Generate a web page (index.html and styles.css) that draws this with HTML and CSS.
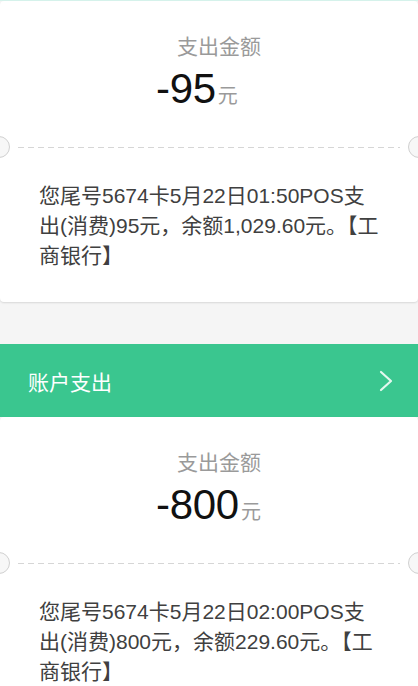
FILE: index.html
```html
<!DOCTYPE html>
<html lang="zh">
<head>
<meta charset="utf-8">
<link rel="stylesheet" href="styles.css">
</head>
<body>
<div class="topline"></div>
<div class="card">
  <div class="label">支出金额</div>
  <div class="amount"><span class="num">-95</span><span class="unit">元</span></div>
  <div class="divider"><span class="notch notch-l"></span><span class="dash"></span><span class="notch notch-r"></span></div>
  <div class="msg">您尾号5674卡5月22日01:50POS支出(消费)95元，余额1,029.60元。【工商银行】</div>
</div>
<div class="gap"></div>
<div class="bar">
  <span class="bar-title">账户支出</span>
  <svg class="chev" width="16" height="24" viewBox="0 0 16 24"><polyline points="3,3 13,12 3,21" fill="none" stroke="#e3f8ef" stroke-width="2.2" stroke-linecap="round" stroke-linejoin="round"/></svg>
</div>
<div class="card">
  <div class="label">支出金额</div>
  <div class="amount"><span class="num">-800</span><span class="unit">元</span></div>
  <div class="divider"><span class="notch notch-l"></span><span class="dash"></span><span class="notch notch-r"></span></div>
  <div class="msg">您尾号5674卡5月22日02:00POS支出(消费)800元，余额229.60元。【工商银行】</div>
</div>
</body>
</html>
```
FILE: styles.css
```css
html, body {
  margin: 0;
  padding: 0;
}
body {
  width: 418px;
  height: 686px;
  overflow: hidden;
  background: #f5f5f5;
  font-family: "Liberation Sans", "Noto Sans CJK SC", sans-serif;
}
.topline {
  height: 1px;
  background: #d6f3ec;
}
.card {
  background: #fff;
  border-radius: 4px;
  box-shadow: 0 1px 2px rgba(0,0,0,0.12);
  padding: 32px 0 31px;
  display: flex;
  flex-direction: column;
}
.label {
  text-align: center;
  font-size: 21px;
  line-height: 28px;
  color: #9a9a9a;
  padding-left: 20px;
}
.amount {
  margin-top: 6px;
  height: 44px;
  display: flex;
  justify-content: flex-start;
  align-items: baseline;
  line-height: 44px;
  padding-left: 156px;
}
.num {
  font-size: 42px;
  color: #111;
  letter-spacing: -0.3px;
}
.unit {
  font-size: 20px;
  color: #9a9a9a;
  margin-left: 2px;
}
.divider {
  position: relative;
  height: 22px;
  margin-top: 25px;
  display: flex;
  align-items: center;
  padding: 0 18px;
}
.dash {
  flex: 1;
  height: 1px;
  background: repeating-linear-gradient(to right, #d6d6d6 0 6px, transparent 6px 10px);
}
.notch {
  position: absolute;
  top: 0;
  width: 22px;
  height: 22px;
  box-sizing: border-box;
  border-radius: 50%;
  border: 1px solid #d0d0d0;
  background: #f7f7f7;
}
.notch-l { left: -12px; }
.notch-r { right: -12px; }
.msg {
  margin-top: 23px;
  padding: 0 36px 0 39px;
  font-size: 21px;
  line-height: 30px;
  color: #404040;
}
.gap {
  height: 42px;
}
.bar {
  height: 73px;
  background: #3ac68f;
  display: flex;
  align-items: center;
  justify-content: space-between;
  padding: 0 24px 0 28px;
}
.bar-title {
  color: #fff;
  font-size: 21px;
  font-family: "Noto Sans CJK SC", sans-serif;
}
.chev {
  display: block;
}
```
